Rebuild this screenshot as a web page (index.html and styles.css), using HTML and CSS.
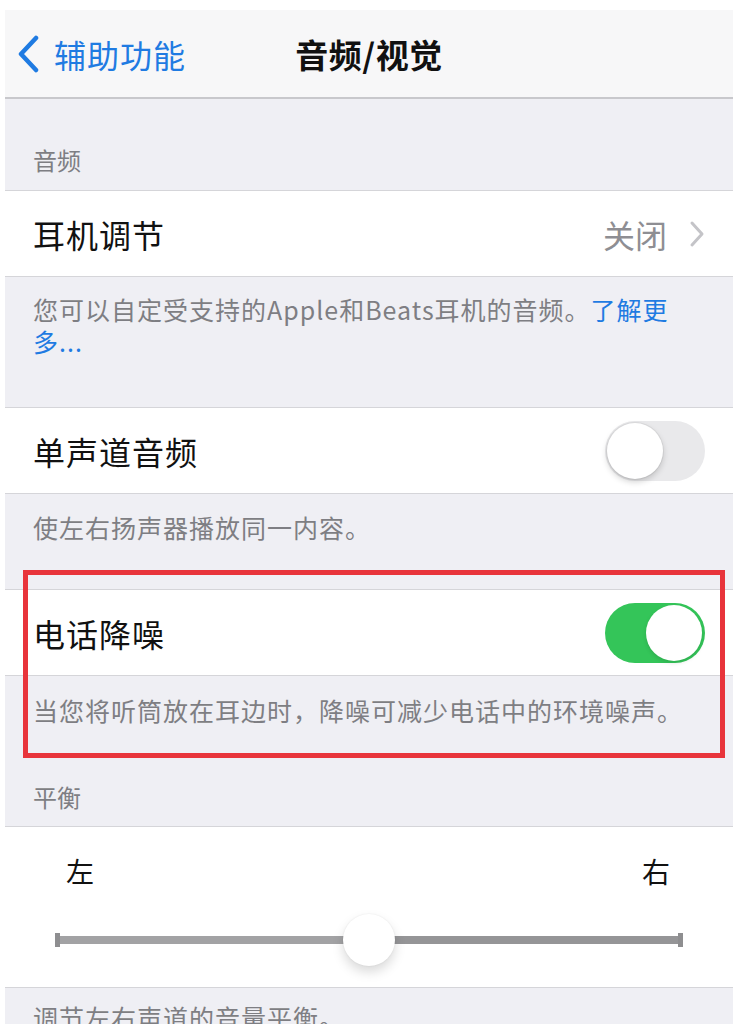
FILE: index.html
```html
<!DOCTYPE html>
<html lang="zh-CN">
<head>
    <meta charset="UTF-8">
    <meta name="viewport" content="width=device-width, initial-scale=1.0">
    <title>音频/视觉</title>
    <link rel="stylesheet" href="styles.css">
</head>
<body>
    <div class="screen">
        <header class="nav">
            <a class="nav-back" href="#">
                <svg class="nav-chevron" viewBox="0 0 22 38" width="22" height="38">
                    <polyline points="19,3 4,19 19,35" fill="none" stroke="currentColor" stroke-width="4.5" stroke-linecap="round" stroke-linejoin="round"/>
                </svg>
                <span>辅助功能</span>
            </a>
            <h1 class="nav-title">音频/视觉</h1>
            <div class="nav-spacer"></div>
        </header>

        <div class="group-header group-header--first">音频</div>
        <div class="cell">
            <span class="cell-label">耳机调节</span>
            <span class="cell-detail">
                关闭
                <svg class="disclosure" viewBox="0 0 16 28" width="16" height="28">
                    <polyline points="3,3 13,14 3,25" fill="none" stroke="currentColor" stroke-width="3" stroke-linecap="round" stroke-linejoin="round"/>
                </svg>
            </span>
        </div>
        <p class="footer footer--loose">您可以自定受支持的Apple和Beats耳机的音频。<a href="#">了解更多...</a></p>

        <div class="cell">
            <span class="cell-label">单声道音频</span>
            <span class="switch"></span>
        </div>
        <p class="footer footer--mid">使左右扬声器播放同一内容。</p>

        <div class="highlight">
            <div class="cell">
                <span class="cell-label">电话降噪</span>
                <span class="switch switch--on"></span>
            </div>
            <p class="footer footer--tight">当您将听筒放在耳边时，降噪可减少电话中的环境噪声。</p>
        </div>

        <div class="group-header">平衡</div>
        <div class="cell cell--balance">
            <div class="balance-labels">
                <span>左</span>
                <span>右</span>
            </div>
            <div class="slider">
                <div class="slider-track slider-track--left"></div>
                <div class="slider-thumb"></div>
                <div class="slider-track slider-track--right"></div>
            </div>
        </div>
        <p class="footer">调节左右声道的音量平衡。</p>
    </div>
</body>
</html>
```

FILE: styles.css
```css
:root {
    --nav-bg: #f7f7f8;
    --group-bg: #efeff4;
    --cell-bg: #ffffff;
    --line: #d5d5d9;
    --text: #111111;
    --muted: #7e7e83;
    --detail: #8e8e93;
    --blue: #1f7be2;
    --green: #34c559;
    --mark: #e8343b;
}

* {
    margin: 0;
    padding: 0;
    box-sizing: border-box;
}

body {
    font-family: "Noto Sans CJK SC", "Noto Sans", sans-serif;
    background: #ffffff;
    color: var(--text);
    padding: 10px 5px 0;
    overflow: hidden;
}

.screen {
    background: var(--group-bg);
    min-height: 1014px;
}

/* навигация */
.nav {
    height: 89px;
    background: var(--nav-bg);
    border-bottom: 2px solid #c8c8cc;
    display: grid;
    grid-template-columns: 1fr auto 1fr;
    align-items: center;
    padding: 0 12px;
}

.nav-back {
    display: flex;
    align-items: center;
    gap: 15px;
    color: var(--blue);
    text-decoration: none;
    font-size: 32px;
    line-height: 40px;
    letter-spacing: 1px;
}

.nav-chevron {
    display: block;
}

.nav-title {
    font-size: 33px;
    font-weight: 700;
    line-height: 40px;
    letter-spacing: 0.5px;
}

/* группы */
.group-header {
    font-size: 24px;
    line-height: 32px;
    color: var(--muted);
    padding: 41px 28px 13px;
}

.group-header--first {
    padding-top: 45px;
    padding-bottom: 14px;
}

.cell {
    background: var(--cell-bg);
    border-top: 1px solid var(--line);
    border-bottom: 1px solid var(--line);
    height: 87px;
    padding: 0 28px;
    display: flex;
    align-items: center;
    justify-content: space-between;
}

.cell-label {
    font-size: 32px;
    line-height: 40px;
    letter-spacing: 1px;
}

.cell-detail {
    display: flex;
    align-items: center;
    gap: 22px;
    font-size: 32px;
    line-height: 40px;
    color: var(--detail);
}

.disclosure {
    color: #c4c4c8;
    display: block;
}

.footer {
    font-size: 25px;
    line-height: 32px;
    letter-spacing: 1px;
    color: var(--muted);
    padding: 13px 28px 20px;
}

.footer a {
    color: var(--blue);
    text-decoration: none;
}

.footer--loose {
    padding: 16px 56px 50px 28px;
}

.footer--mid {
    padding: 17px 28px 46px;
}

.footer--tight {
    padding: 18px 28px 14px;
}

/* переключатели */
.switch {
    width: 100px;
    height: 60px;
    border-radius: 30px;
    background: #e9e9eb;
    position: relative;
    flex-shrink: 0;
}

.switch::after {
    content: "";
    position: absolute;
    top: 2px;
    left: 2px;
    width: 56px;
    height: 56px;
    border-radius: 50%;
    background: #ffffff;
    box-shadow: 0 3px 6px rgba(0,0,0,0.18), 0 0 0 1px rgba(0,0,0,0.05);
}

.switch--on {
    background: var(--green);
}

.switch--on::after {
    left: auto;
    right: 3px;
    box-shadow: 0 2px 4px rgba(0,0,0,0.12);
}

/* выделение */
.highlight {
    position: relative;
}

.highlight::after {
    content: "";
    position: absolute;
    top: -19px;
    left: 18px;
    right: 8px;
    bottom: -18px;
    border: 5px solid var(--mark);
    pointer-events: none;
}

/* баланс */
.cell--balance {
    height: 162px;
    flex-direction: column;
    align-items: stretch;
    justify-content: flex-start;
    padding: 26px 50px 0;
}

.balance-labels {
    display: flex;
    justify-content: space-between;
    padding: 0 13px 0 11px;
    font-size: 28px;
    line-height: 36px;
}

.slider {
    display: flex;
    align-items: center;
    margin-top: 24px;
    height: 54px;
}

.slider-track {
    height: 8px;
    flex: 1;
    background: #a2a2a4;
    position: relative;
}

.slider-track--right {
    background: #959597;
}

.slider-track--left::before,
.slider-track--right::after {
    content: "";
    position: absolute;
    top: -3px;
    width: 5px;
    height: 14px;
    background: #8e8e90;
}

.slider-track--left::before {
    left: 0;
}

.slider-track--right::after {
    right: 0;
}

.slider-thumb {
    width: 52px;
    height: 52px;
    border-radius: 50%;
    background: #ffffff;
    box-shadow: 0 6px 12px rgba(0,0,0,0.15), 0 0 2px rgba(0,0,0,0.08);
    flex-shrink: 0;
    margin: 0 -2px;
    position: relative;
    z-index: 1;
}
```
